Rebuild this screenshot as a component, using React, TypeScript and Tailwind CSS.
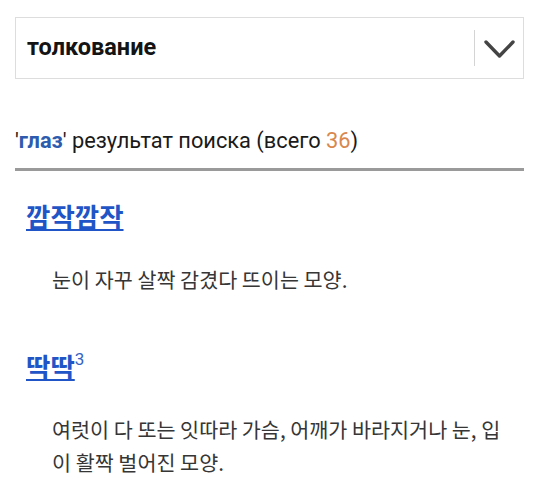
import React from "react";

const results = [
  {
    word: "깜작깜작",
    sup: "",
    def: "눈이 자꾸 살짝 감겼다 뜨이는 모양.",
  },
  {
    word: "딱딱",
    sup: "3",
    def: "여럿이 다 또는 잇따라 가슴, 어깨가 바라지거나 눈, 입이 활짝 벌어진 모양.",
  },
];

export default function App() {
  return (
    <div className="w-[539px] h-[494px] overflow-hidden bg-white px-[15px] font-['Roboto','Noto_Sans_CJK_KR',sans-serif]">
      {/* Dictionary selector */}
      <div className="mt-[17px] h-[62px] border border-[#dddddd] flex items-center">
        <span className="flex-1 pl-[11px] text-[23.5px] font-bold text-[#141414]">
          толкование
        </span>
        <div className="w-px h-[36px] bg-[#d4d4d4]" />
        <div className="w-[48px] flex items-center justify-center pt-[1px]">
          <svg width="31" height="20" viewBox="0 0 31 20" fill="none">
            <path
              d="M2 3 L15.5 17 L29 3"
              stroke="#444"
              strokeWidth="3.4"
              strokeLinecap="round"
              strokeLinejoin="round"
            />
          </svg>
        </div>
      </div>

      {/* Result header */}
      <div className="mt-[48px] pb-[13px] border-b-[3px] border-[#9a9a9a] text-[21.8px] leading-[28px] text-[#1a1a1a]">
        '<span className="font-bold text-[#2d5cae]">глаз</span>' результат поиска (всего{" "}
        <span className="text-[#d8884f]">36</span>)
      </div>

      {/* Results */}
      <div className="font-['Noto_Sans_CJK_KR',sans-serif]">
        {results.map((r, i) => (
          <div key={r.word} className={i === 0 ? "mt-[29px]" : "mt-[54px]"}>
            <div className="pl-[11px] text-[26.5px] leading-[32px] font-bold">
              <a className="text-[#1f55c6] underline underline-offset-[2px] decoration-[2px]" href="#">
                {r.word}
              </a>
              {r.sup && (
                <sup className="text-[17px] font-normal text-[#3563c4] font-['Roboto',sans-serif] top-[-0.7em]">
                  {r.sup}
                </sup>
              )}
            </div>
            <p className="mt-[31px] pl-[37px] w-[499px] text-[20.7px] leading-[33px] text-[#363636]">
              {r.def}
            </p>
          </div>
        ))}
      </div>
    </div>
  );
}
